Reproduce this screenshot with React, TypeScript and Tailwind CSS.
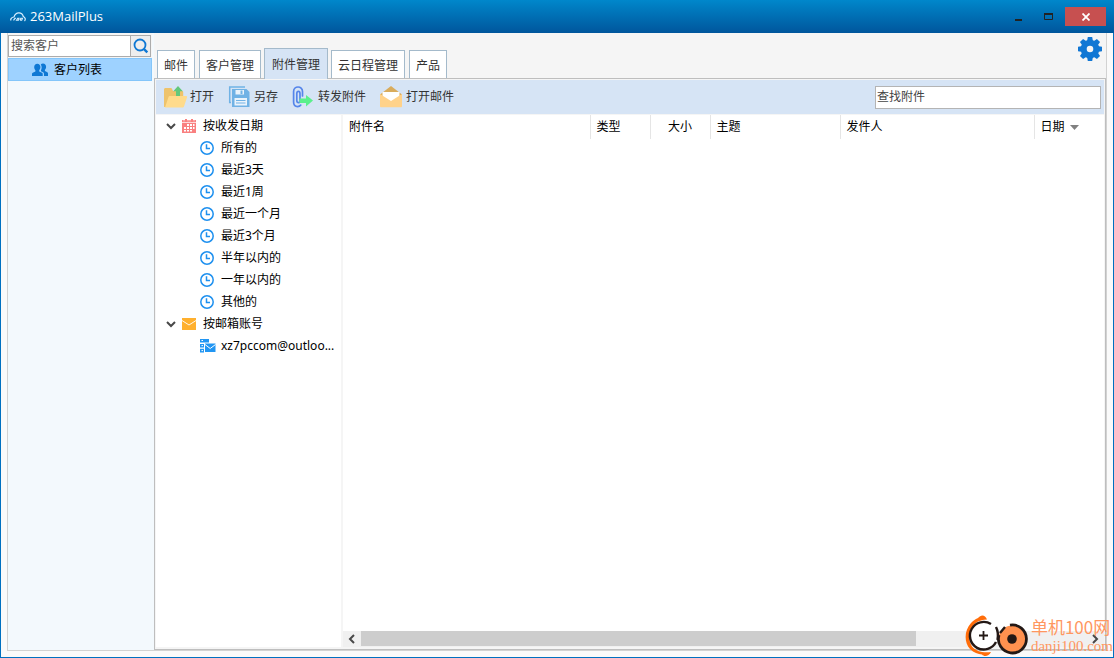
import React, { useState } from 'react';
import clsx from 'clsx';

const tabs = ['邮件', '客户管理', '附件管理', '云日程管理', '产品'];

const dateFilters = ['所有的', '最近3天', '最近1周', '最近一个月', '最近3个月', '半年以内的', '一年以内的', '其他的'];

function CloudLogo() {
    return (
        <svg className="h-4 w-4" viewBox="0 0 16 16" fill="none" stroke="#d8efff" aria-hidden="true">
            <path d="M1 11.500C.2 10 1.500 8.300 4 8c.8-2.500 3-4.200 5-4.100 2.200.1 3.700 1.600 4.300 3.600 1.900.9 2.600 3 1.200 4.500" strokeWidth="1.200" />
            <path d="M3.500 11.300l1.500-2h1M6.500 11.300l1.200-2H9l-.6 2zM10 11.300l.8-2h1.700l-.8 2H10" strokeWidth="1.100" />
        </svg>
    );
}

function SearchIcon() {
    return (
        <svg className="h-4 w-4" viewBox="0 0 16 16" fill="none" stroke="#0f78d4" aria-hidden="true">
            <circle cx="7" cy="7" r="5.500" strokeWidth="1.800" />
            <path d="M10.800 10.800l3.500 3.500" strokeWidth="2.400" />
        </svg>
    );
}

function PeopleIcon() {
    return (
        <svg className="h-4 w-4" viewBox="0 0 16 16" fill="#0f78d4" aria-hidden="true">
            <path d="M0 14v-2.200c0-1.300 2.200-1.700 3.400-2.400V8.200C2.600 7.500 2.200 6.300 2.200 5c0-2 1.200-3.300 3.100-3.300S8.400 3 8.400 5c0 1.300-.5 2.500-1.200 3.200v1.200c1.200.7 3.500 1.100 3.500 2.400V14z" />
            <path d="M9 8.300c.9-1.600 1-4-.2-5.700.5-.7 1.300-1 2.200-1 1.900 0 3.100 1.300 3.100 3.200 0 1.200-.5 2.300-1.200 3v1.200c1.200.6 3.100 1 3.100 2.400V14h-4v-2.300c0-1.400-1.600-1.900-3-2.500z" />
        </svg>
    );
}

function GearIcon() {
    return (
        <svg className="h-6 w-6" viewBox="0 0 24 24" fill="#1177d4" aria-hidden="true">
            <path d="M9.800 0h4.400l.9 5H8.900zM9.800 24h4.400l.9-5H8.900zM0 9.800v4.400l5 .9V8.900zM24 9.800v4.400l-5 .9V8.900z" />
            <path d="M9.800 0h4.400l.9 5H8.900zM9.800 24h4.400l.9-5H8.900zM0 9.800v4.400l5 .9V8.900zM24 9.800v4.400l-5 .9V8.900z" transform="rotate(45 12 12)" />
            <circle cx="12" cy="12" r="6.300" fill="none" stroke="#1177d4" strokeWidth="6" />
        </svg>
    );
}

function OpenIcon() {
    return (
        <svg className="h-6 w-6" viewBox="0 0 24 24" aria-hidden="true">
            <path d="M0 22V4.500C0 3.600.6 3 1.500 3h5c1 0 1.500.6 1.800 1.400L9 6h9c.8 0 1.200.5 1.200 1.200V11L17 22z" fill="#eec36c" />
            <path d="M14 1l4.800 5.200h-2.800V13h-4V6.200H9.300z" fill="#63c87c" />
            <path d="M1 22.500L4.500 12c.2-.6.600-1 1.200-1H22c.9 0 1.300.6 1 1.400l-3 9.100c-.2.600-.6 1-1.200 1z" fill="#ffdb8c" />
        </svg>
    );
}

function SaveAsIcon() {
    return (
        <svg className="h-6 w-6" viewBox="0 0 24 24" fill="none" aria-hidden="true">
            <path d="M3 17.500H1.700V2H17" stroke="#70b2e5" strokeWidth="1.500" />
            <path d="M4 4h14.500L21.500 7v15H4z" fill="#70b2e5" />
            <path d="M7.500 5h8.500v4.500H7.500z" fill="#eaf3fb" />
            <path d="M12.500 5.500h2V9h-2z" fill="#70b2e5" />
            <path d="M6.500 13h12.500v7.500H6.500z" fill="#eaf3fb" />
            <path d="M8 15.500h9.500M8 18h9.500" stroke="#70b2e5" strokeWidth="1.200" />
        </svg>
    );
}

function ForwardIcon() {
    return (
        <svg className="h-6 w-6" viewBox="0 0 24 24" fill="none" aria-hidden="true">
            <path d="M4.800 8v7.500c0 2.700 3.600 2.700 3.600 0M10.500 11V6.500c0-6-8.900-6-8.900 0V17c0 3 1.600 4.600 4 4.600 1.500 0 2.500-.5 3.200-1.500M4.800 8.500c0-2.800 3.200-2.800 3.200 0V15" stroke="#5585ea" strokeWidth="1.700" strokeLinecap="round" />
            <path d="M7.500 13.500H14V10l7 5.500-7 6V18H7.500z" fill="#5af08c" />
        </svg>
    );
}

function OpenMailIcon() {
    return (
        <svg className="h-6 w-6" viewBox="0 0 24 24" aria-hidden="true">
            <path d="M0 9.500L11 1l11 8.500V13H0z" fill="#d9ac5c" />
            <path d="M2.500 7h17v7L11 19l-8.500-5z" fill="#fff" />
            <path d="M0 9l11 7 11-7v12c0 .8-.4 1.300-1.300 1.300H1.300C.4 22.300 0 21.800 0 21z" fill="#ffd28a" />
        </svg>
    );
}

function CalendarIcon() {
    return (
        <svg className="h-3.5 w-3.5" viewBox="0 0 14 14" aria-hidden="true">
            <path d="M0 1h14v13H0zM3 0h2v2H3zM9 0h2v2H9z" fill="#f98080" />
            <path d="M0 3.500h14" stroke="#fff" strokeWidth=".7" />
            <path d="M2 1v1.500M6 1v1.500M8 1v1.500M12 1v1.500" stroke="#fff" strokeWidth=".6" />
            <path d="M5 5h2v2H5zM8 5h2v2H8zM11 5h1.500v2H11zM2 8h2v2H2zM5 8h2v2H5zM8 8h2v2H8zM11 8h1.500v2H11zM2 11h2v1.500H2zM5 11h2v1.500H5zM8 11h2v1.500H8z" fill="#fff" />
        </svg>
    );
}

function ClockIcon() {
    return (
        <svg className="h-3.5 w-3.5" viewBox="0 0 14 14" fill="none" stroke="#1e90ef" aria-hidden="true">
            <circle cx="7" cy="7" r="6.200" strokeWidth="1.500" />
            <path d="M6.500 3.300v4.200H10" strokeWidth="1.500" />
        </svg>
    );
}

function EnvelopeIcon() {
    return (
        <svg className="h-3.5 w-3.5" viewBox="0 0 14 14" aria-hidden="true">
            <path d="M0 1h14v12H0z" fill="#ffb02e" />
            <path d="M0 3.500l7 4.500 7-4.500" fill="none" stroke="#fff" strokeWidth=".9" />
        </svg>
    );
}

function AccountIcon() {
    return (
        <svg className="h-3.5 w-4" viewBox="0 0 16 14" aria-hidden="true">
            <path d="M0 0h9v3.600H0zM0 4.900h4v3.600H0zM0 9.800h4v3.700H0z" fill="#2196f3" />
            <path d="M1.500 1.500H3M1.500 6.600H3M1.500 11.600H3" stroke="#fff" strokeWidth="1" />
            <path d="M5 4.500h10.500v8.500H5z" fill="#2196f3" />
            <path d="M5 5.500l5.200 4L15.500 5.500" fill="none" stroke="#fff" strokeWidth="1" />
        </svg>
    );
}

function Chevron({ className }: { className?: string }) {
    return (
        <svg className={clsx('h-2.5 w-2.5', className)} viewBox="0 0 10 10" fill="none" stroke="#484848" strokeWidth="2" aria-hidden="true">
            <path d="M1 3l4 4 4-4" />
        </svg>
    );
}

function Watermark() {
    return (
        <div className="pointer-events-none absolute right-0 bottom-0 flex items-end gap-0.5">
            <svg className="h-10.5 w-16" viewBox="0 0 64 42" fill="none" aria-hidden="true">
                <path d="M22 4.500C20-.5 16-.5 13 3 10 4.500 8 5.500 6 8-1 16-1 27 5 34c4 4 8 5 12 5.500 2 2.500 7 2 9-2.500-8 1-15-.5-19-5.500C3 25 3 15 10 8.500c4-3 8-4 12-4z" fill="#ff6d0a" />
                <circle cx="18.500" cy="20.500" r="14" fill="#fff" />
                <path d="M26 9A13.800 13.800 0 1 0 31 27" stroke="#231815" strokeWidth="2.400" />
                <path d="M18.500 16v9M14 20.500h9" stroke="#231815" strokeWidth="1.800" />
                <circle cx="47" cy="24" r="13.500" fill="#ff914f" />
                <path d="M45 10.200A14 14 0 1 1 34 20" stroke="#231815" strokeWidth="2.800" />
                <path d="M31 12c2 4 2.500 8 1.500 13M35 18l5-6" stroke="#231815" strokeWidth="2.400" />
                <circle cx="47" cy="24" r="4.800" fill="#231815" />
            </svg>
            <div className="pr-px pb-0.5 text-[#ff975f]">
                <p className="font-['Noto_Sans_CJK_SC',sans-serif] text-[17px] leading-5">单机100网</p>
                <p className="font-['Liberation_Serif',serif] text-[15px] leading-[18px]">danji100.com</p>
            </div>
        </div>
    );
}

export default function App() {
    const [activeTab, setActiveTab] = useState('附件管理');
    const [customerQuery, setCustomerQuery] = useState('');
    const [attachmentQuery, setAttachmentQuery] = useState('');

    return (
        <div className="relative flex h-screen flex-col overflow-hidden border-b border-[#0070c0] bg-[#fafafa] font-['Noto_Sans','Noto_Sans_CJK_SC',sans-serif] text-xs text-black">
            {/* Title bar */}
            <header className="flex h-[33px] shrink-0 items-center bg-gradient-to-b from-[#0087cb] to-[#00569c] pr-2 pl-2.5 text-white">
                <CloudLogo />
                <h1 className="ml-1 flex-1 font-['Open_Sans',sans-serif] text-[13px]">263MailPlus</h1>
                <button aria-label="最小化" className="flex h-5 w-[30px] items-center justify-center">
                    <svg className="h-2.5 w-2.5" viewBox="0 0 10 10" aria-hidden="true"><path d="M2 7h7v2H2z" fill="#222" /></svg>
                </button>
                <button aria-label="最大化" className="flex h-5 w-[30px] items-center justify-center">
                    <svg className="h-2.5 w-2.5" viewBox="0 0 10 10" fill="none" aria-hidden="true"><path d="M1.500 2.500h8v5h-8z" stroke="#222" /><path d="M1 2h9" stroke="#222" strokeWidth="2" /></svg>
                </button>
                <button aria-label="关闭" className="ml-0.5 flex h-[19px] w-[41px] items-center justify-center bg-[#c75050]">
                    <svg className="h-2 w-2" viewBox="0 0 8 8" stroke="#fff" strokeWidth="1.800" aria-hidden="true"><path d="M.5 .5l7 7M7.500 .5l-7 7" /></svg>
                </button>
            </header>

            <div className="flex min-h-0 flex-1 border-x border-[#0070c0] pr-1.5 pb-1.5 pl-1.5">
                <div className="flex min-w-0 flex-1 border-x border-b border-[#d2d2d2] bg-[#f5f5f5]">
                    {/* Customers */}
                    <aside className="flex w-[146px] shrink-0 flex-col bg-[#f3f9fd] pr-0.5">
                        <div className="flex h-[25px] shrink-0 items-center bg-[#f5f5f5] pr-px">
                            <div className="flex h-[22px] w-full border border-[#acacac]">
                                <input
                                    type="text"
                                    aria-label="搜索客户"
                                    placeholder="搜索客户"
                                    value={customerQuery}
                                    onChange={(e) => setCustomerQuery(e.target.value)}
                                    className="min-w-0 flex-1 bg-white pl-0.5 outline-none placeholder:text-[#555]"
                                />
                                <button aria-label="搜索" className="flex w-5 items-center justify-center border-l border-[#acacac] bg-[#eee]">
                                    <SearchIcon />
                                </button>
                            </div>
                        </div>
                        <button className="flex h-[23px] shrink-0 items-center gap-1.5 border border-[#84c6fa] bg-[#9ed2ff] pl-[23px]">
                            <PeopleIcon />
                            客户列表
                        </button>
                    </aside>

                    <main className="flex min-w-0 flex-1 flex-col">
                        <div className="flex h-[45px] shrink-0 justify-between">
                            <div role="tablist" className="flex items-end gap-1 pl-[3px]">
                                {tabs.map((tab) => (
                                    <button
                                        key={tab}
                                        role="tab"
                                        aria-selected={tab === activeTab}
                                        onClick={() => setActiveTab(tab)}
                                        className={clsx(
                                            'border border-b-0 border-[#a4bacb] pt-0.5 text-[#333]',
                                            tab === activeTab
                                                ? 'relative z-10 -mx-px -mb-px h-[31px] bg-[#d6e4f5] px-[7px]'
                                                : 'h-7 bg-white px-1.5'
                                        )}
                                    >
                                        {tab}
                                    </button>
                                ))}
                            </div>
                            <button aria-label="设置" className="mt-1 mr-1 h-6 w-6">
                                <GearIcon />
                            </button>
                        </div>

                        <section className="flex min-h-0 flex-1 flex-col border border-[#bebebe] bg-[#f5f5f5] px-px pt-px pb-0.5">
                            {/* Toolbar */}
                            <div className="flex h-[34px] shrink-0 items-center gap-3.5 bg-[#d6e4f5] pr-[3px] pl-2 text-[#333]">
                                <button className="flex items-center gap-0.5"><OpenIcon />打开</button>
                                <button className="flex items-center gap-0.5"><SaveAsIcon />另存</button>
                                <button className="flex items-center gap-0.5"><ForwardIcon />转发附件</button>
                                <button className="flex items-center gap-0.5"><OpenMailIcon />打开邮件</button>
                                <input
                                    type="text"
                                    aria-label="查找附件"
                                    placeholder="查找附件"
                                    value={attachmentQuery}
                                    onChange={(e) => setAttachmentQuery(e.target.value)}
                                    className="ml-auto h-[23px] w-[226px] border border-[#b4b4b4] bg-white px-px pb-0.5 outline-none placeholder:text-[#444]"
                                />
                            </div>

                            <div className="mt-px flex min-h-0 flex-1 bg-white">
                                {/* Filter tree */}
                                <nav className="w-[187px] shrink-0 border-r-2 border-[#f5f5f5] leading-[22px]">
                                    <button className="flex h-[22px] items-center pl-2.5">
                                        <Chevron className="mr-1.5" />
                                        <CalendarIcon />
                                        <span className="ml-[7px]">按收发日期</span>
                                    </button>
                                    <ul>
                                        {dateFilters.map((label) => (
                                            <li key={label}>
                                                <button className="flex h-[22px] items-center gap-[7px] pl-11">
                                                    <ClockIcon />
                                                    {label}
                                                </button>
                                            </li>
                                        ))}
                                    </ul>
                                    <button className="flex h-[22px] items-center pl-2.5">
                                        <Chevron className="mr-1.5" />
                                        <EnvelopeIcon />
                                        <span className="ml-[7px]">按邮箱账号</span>
                                    </button>
                                    <button className="flex h-[22px] items-center gap-[5px] pl-11">
                                        <AccountIcon />
                                        xz7pccom@outloo...
                                    </button>
                                </nav>

                                {/* Attachment list */}
                                <div className="flex min-w-0 flex-1 flex-col">
                                    <div className="flex-1 overflow-hidden">
                                        <table className="w-full table-fixed">
                                            <thead>
                                                <tr className="h-6 text-left *:border-[#e5e5e5] *:px-1.5 *:font-normal">
                                                    <th className="w-[247px] border-r">附件名</th>
                                                    <th className="w-[60px] border-r">类型</th>
                                                    <th className="w-[60px] border-r text-center">大小</th>
                                                    <th className="w-[130px] border-r">主题</th>
                                                    <th className="w-[194px] border-r">发件人</th>
                                                    <th aria-sort="descending">
                                                        <button className="flex items-center gap-[5px]">
                                                            日期
                                                            <svg className="h-[5px] w-[9px]" viewBox="0 0 9 5" fill="#808080" aria-hidden="true"><path d="M0 0h9L4.500 5z" /></svg>
                                                        </button>
                                                    </th>
                                                </tr>
                                            </thead>
                                        </table>
                                    </div>
                                    <div className="flex h-4 shrink-0 bg-[#f0f0f0]">
                                        <button aria-label="向左滚动" className="flex w-[18px] items-center justify-center">
                                            <Chevron className="rotate-90" />
                                        </button>
                                        <div className="flex-1">
                                            <div className="h-[15px] w-[76.5%] bg-[#cdcdcd]" />
                                        </div>
                                        <button aria-label="向右滚动" className="flex w-[18px] items-center justify-center">
                                            <Chevron className="-rotate-90" />
                                        </button>
                                    </div>
                                </div>
                            </div>
                        </section>
                    </main>
                </div>
            </div>

            <Watermark />
        </div>
    );
}
